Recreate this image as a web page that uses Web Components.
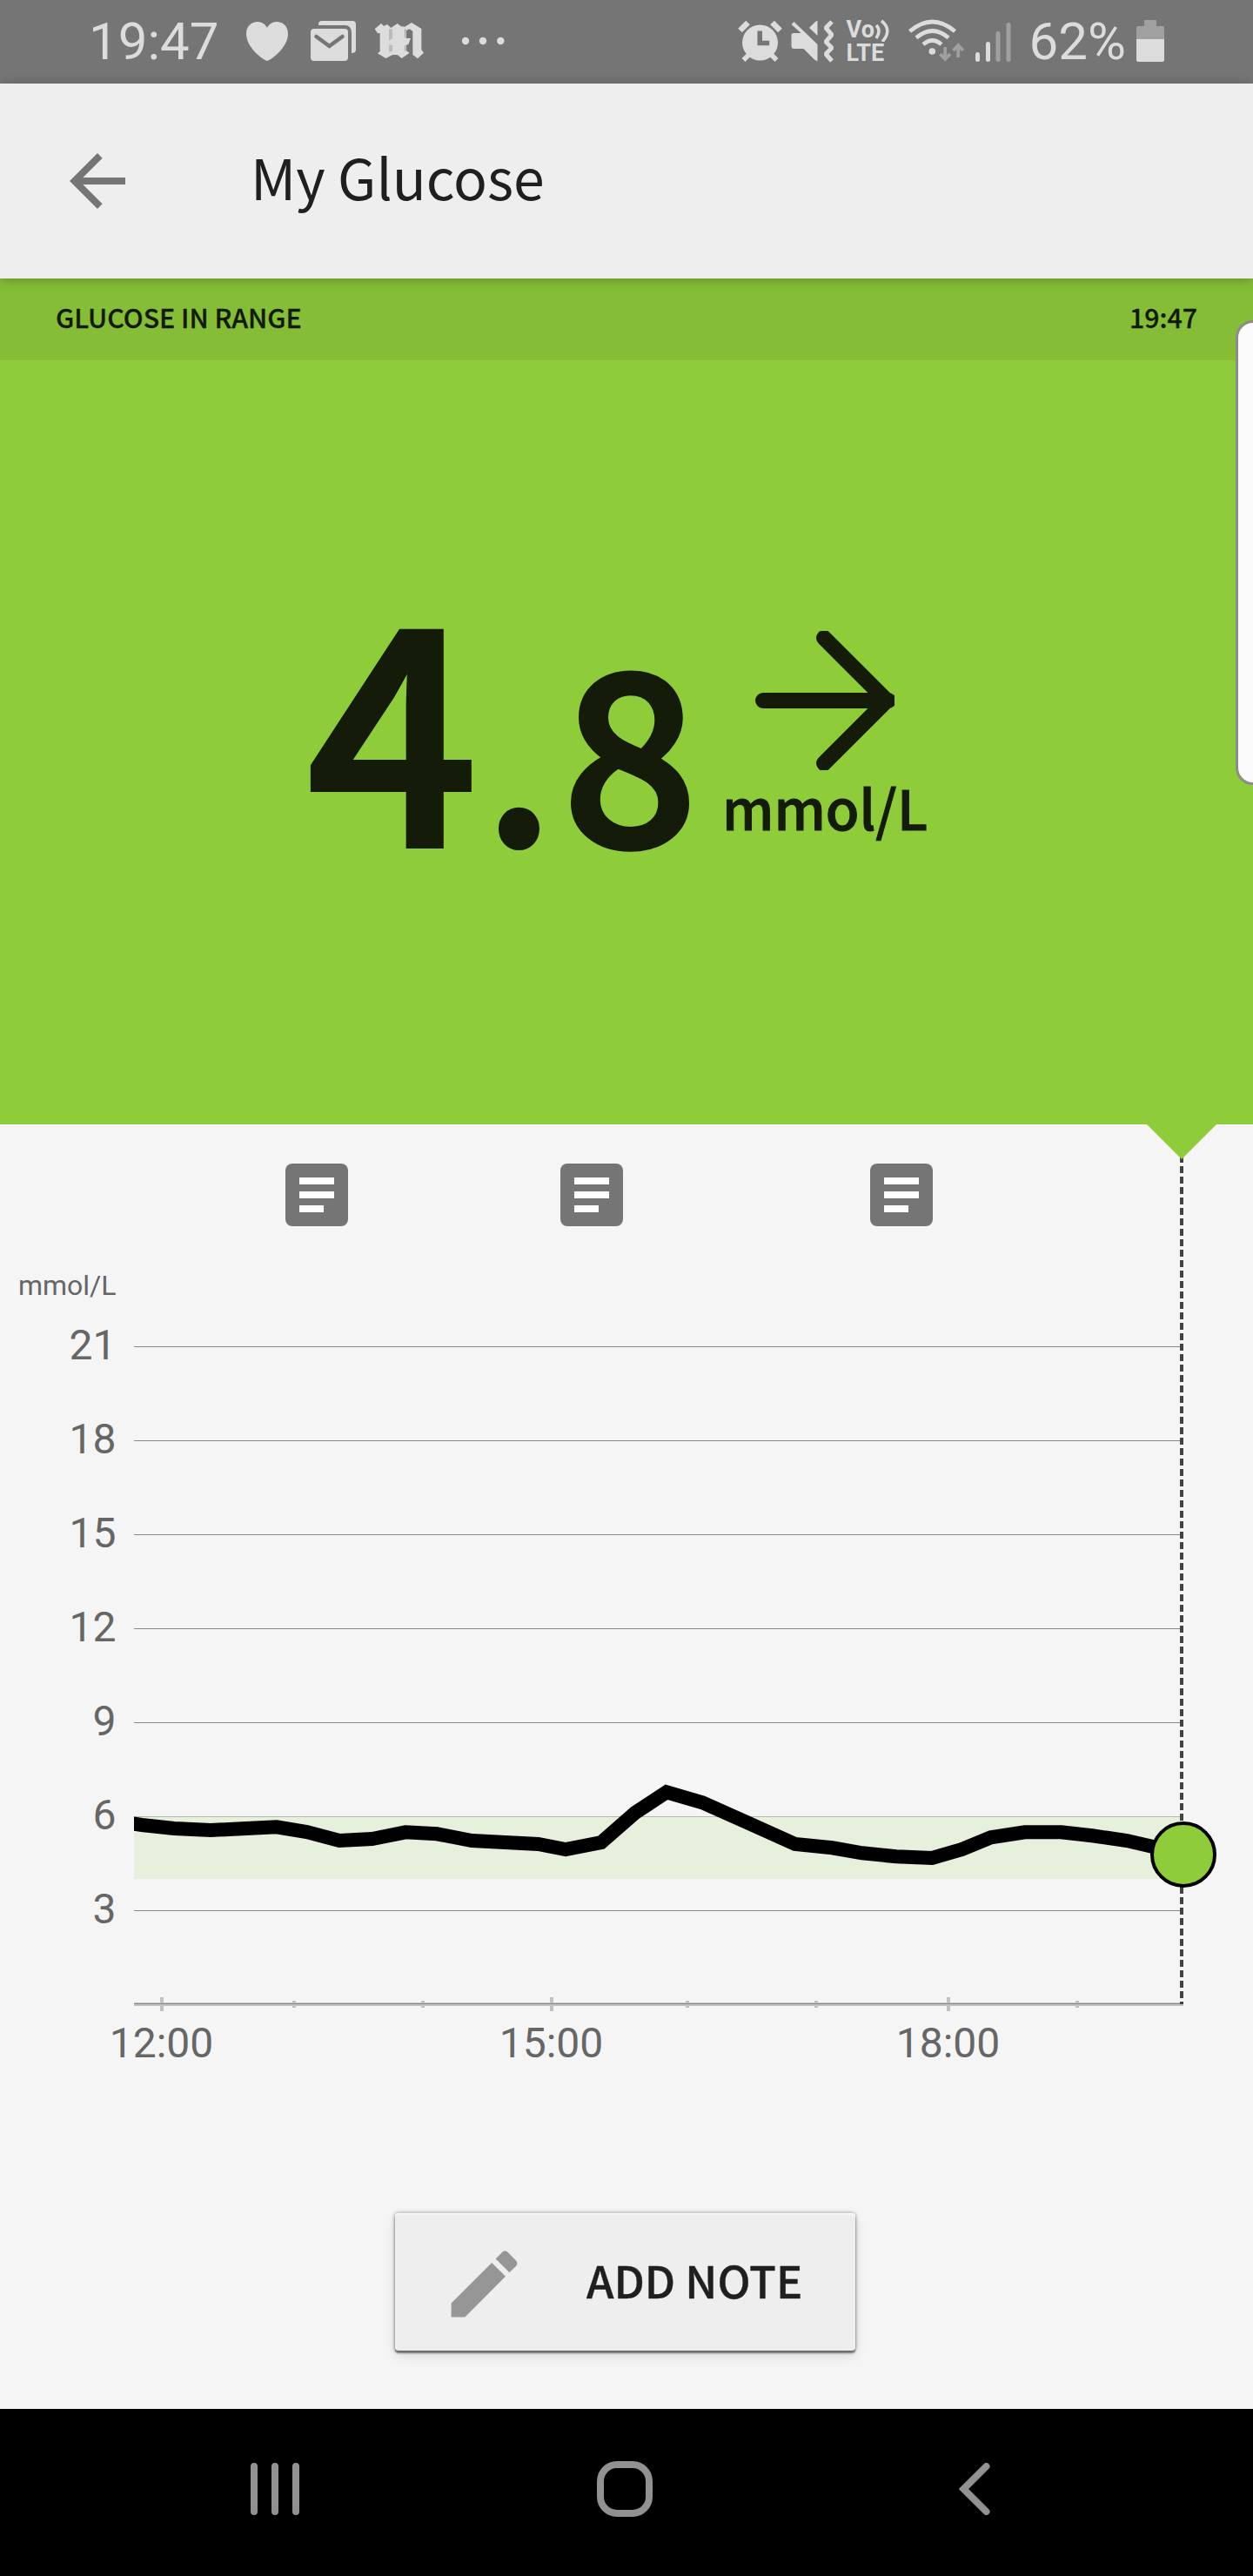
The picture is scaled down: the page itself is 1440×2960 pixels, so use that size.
<!DOCTYPE html>
<html lang="en">
<head>
<meta charset="utf-8">
<title>My Glucose</title>
<style>
    body {
        margin: 0;
        background: #f5f5f5;
        font-family: "Noto Sans CJK SC", "Noto Sans", sans-serif;
    }
</style>
</head>
<body>
<glucose-app></glucose-app>

<template id="status-bar-template">
    <style>
        :host {
            display: flex;
            justify-content: space-between;
            height: 96px;
            background: #757575;
            color: #dcdcdc;
            font: 60px/96px Roboto, sans-serif;
        }

        .group {
            display: flex;
        }

        .left {
            padding-left: 102px;
        }

        .right {
            padding-right: 102px;
        }

        svg {
            display: block;
            height: 96px;
            fill: #dcdcdc;
        }

        .volte {
            display: flex;
            flex-direction: column;
            width: 58px;
            margin-left: 15px;
            padding-top: 21px;
            font: bold 27px/27px Roboto, sans-serif;
        }

        .volte div {
            display: flex;
            height: 27px;
        }

        .volte svg {
            height: 26px;
            margin-top: 1px;
        }
    </style>
    <div class="group left">
        <span id="time"></span>
        <svg width="240" viewBox="250 0 240 96" style="margin-left:-1px">
            <path d="M307 70C301 68 283 54 283 39C283 30 289 25 296 25C301 25 305 28 307 32C309 28 313 25 318 25C325 25 331 30 331 39C331 54 313 68 307 70z"/>
            <path d="M366 29v-1q0-4 4-4h35q4 0 4 4v29q0 4-5 4v-23q0-9-8-9z"/>
            <rect x="357" y="33" width="43" height="37" rx="4"/>
            <path d="M363.500 42l15 11 15-11" fill="none" stroke="#757575" stroke-width="4.500" stroke-linecap="round"/>
            <g transform="translate(424 18) scale(.3333)">
                <path d="M20 46L42 27l10 9 11-6 13 12 22-15 13 10 13 1 23-14 34 21v73l8 10-21 20-17-14V54l-11-8-11 5v27h15l-8 21-7 2v20l11 7-27 19-15-12H82l-24 12-28-17 8-7V60l-8 1z"/>
                <path d="M72 46v38M78 46v34M72 100v24M78 102v22M125 46v30M125 102v20" stroke="#757575" stroke-width="2"/>
            </g>
        </svg>
        <svg width="50" viewBox="530 0 50 96" style="margin-left:40px">
            <circle cx="535" cy="47" r="4.200"/><circle cx="555" cy="47" r="4.200"/><circle cx="575.300" cy="47" r="4.200"/>
        </svg>
    </div>
    <div class="group right">
        <svg width="111" viewBox="846 0 111 96">
            <circle cx="872.500" cy="49" r="20.500"/>
            <path d="M849.500 35l9-9M895.500 35l-9-9" stroke="#dcdcdc" stroke-width="6.500"/>
            <path d="M853.500 69l7-7M891.500 69l-7-7" stroke="#dcdcdc" stroke-width="5.500"/>
            <path d="M872.200 35.500v14h11" fill="none" stroke="#757575" stroke-width="5.500"/>
            <path d="M911.500 25l27 26v19q-2 0-4-2l-12-12h-11q-3 0-3-3v-13q0-2 3-2h8l-11-10z"/>
            <path d="M929 32l7-7q1-1 2.500-1v17z"/>
            <path d="M955 25l-7 7 7 8-7 8 7 7-7 7 7 8" fill="none" stroke="#dcdcdc" stroke-width="5" stroke-linejoin="bevel"/>
        </svg>
        <div class="volte">
            <div><span>Vo</span><svg width="18" viewBox="1003 22 18 26"><path d="M1005 29q6 6 0 15M1011 24q13 10 1 24" fill="none" stroke="#dcdcdc" stroke-width="3.500"/></svg></div>
            <div><span>LTE</span></div>
        </div>
        <svg width="120" viewBox="1042 0 120 96" style="margin-left:12px">
            <g fill="none" stroke="#dcdcdc" stroke-width="4.800">
                <path d="M1044.500 36q26-22 52 0M1052 43.500q18.500-16 37 0M1060 51q10.500-9 21 0"/>
            </g>
            <circle cx="1070.300" cy="59" r="3.800"/>
            <path d="M1085.200 54v13M1079.500 62l5.700 6 5.700-6M1100.200 66v-14M1094.500 58l5.700-6 5.700 6" fill="none" stroke="#a0a0a0" stroke-width="3.800"/>
            <rect x="1120" y="60" width="5" height="11" rx="2.500"/>
            <rect x="1132" y="48" width="5" height="23" rx="2.500"/>
            <rect x="1143.500" y="36" width="5" height="35" rx="2.500" fill="#a0a0a0"/>
            <rect x="1155.500" y="26" width="5" height="45" rx="2.500" fill="#a0a0a0"/>
        </svg>
        <span id="battery" style="margin-left:20px"></span>
        <svg width="32" viewBox="1306 0 32 96" style="margin-left:12px">
            <path d="M1306 45v-13q0-2 2-2h7v-7h14v7h7q2 0 2 2v13z" fill="#a0a0a0"/>
            <path d="M1306 45h32v24q0 2-2 2h-28q-2 0-2-2z"/>
        </svg>
    </div>
</template>

<template id="app-bar-template">
    <style>
        :host {
            display: flex;
            align-items: center;
            position: relative;
            z-index: 1;
            height: 224px;
            background: #eee;
            color: #1f1f1f;
            box-shadow: 0 2px 12px rgba(0, 0, 0, 0.25);
        }

        svg {
            width: 96px;
            height: 96px;
            margin-left: 64px;
            fill: #757575;
        }

        h1 {
            margin: 0 0 12px 128px;
            font-size: 64.300px;
            line-height: 96px;
            font-weight: 400;
        }
    </style>
    <svg viewBox="0 0 24 24"><path d="M20 11H7.830l5.590-5.590L12 4l-8 8 8 8 1.410-1.410L7.830 13H20v-2z"/></svg>
    <h1><slot></slot></h1>
</template>

<template id="glucose-reading-template">
    <style>
        :host {
            display: flex;
            flex-direction: column;
            position: relative;
            height: 972px;
            background: #8fcc3a;
            color: #141b08;
        }

        header {
            display: flex;
            justify-content: space-between;
            height: 94px;
            padding: 0 64px;
            background: #85bd36;
            color: #111a04;
            font-size: 30.300px;
            line-height: 88px;
            font-weight: 500;
            -webkit-text-stroke: 0.3px;
        }

        .reading {
            display: flex;
            flex: 1;
            padding-left: 353px;
            font-weight: 500;
        }

        .value {
            display: flex;
            align-items: baseline;
            width: 473px;
            height: 400px;
            margin-top: 208px;
            line-height: 400px;
        }

        .whole {
            font-size: 344px;
            -webkit-text-stroke: 6px;
        }

        .point {
            margin-left: 4px;
            font-size: 290px;
            -webkit-text-stroke: 2px;
        }

        .fraction {
            margin-left: 7px;
            font-size: 272px;
            -webkit-text-stroke: 6px;
        }

        .side {
            display: flex;
            flex-direction: column;
            width: 240px;
            margin-top: 311px;
        }

        .side svg {
            width: 160px;
            height: 160px;
            margin-left: 42px;
        }

        .unit {
            padding-left: 4px;
            font-size: 63px;
            line-height: 83px;
            -webkit-text-stroke: 1px;
        }

        /* edge panel handle, floats over the right border */
        .handle {
            position: absolute;
            top: 48px;
            right: -20px;
            box-sizing: border-box;
            width: 40px;
            height: 534px;
            border: 3px solid #8c8c88;
            border-radius: 22px;
            background: #fafafa;
        }
    </style>
    <header><span><slot></slot></span><span id="time"></span></header>
    <div class="reading">
        <div class="value"><span class="whole"></span><span class="point">.</span><span class="fraction"></span></div>
        <div class="side">
            <svg viewBox="0 0 160 160"><path d="M9 80h144M79 8l72 72-72 72" fill="none" stroke="#141b08" stroke-width="18" stroke-linecap="round"/></svg>
            <span class="unit"></span>
        </div>
    </div>
    <div class="handle"></div>
</template>

<template id="glucose-chart-template">
    <style>
        :host {
            display: block;
            height: 1188px;
        }

        svg {
            display: block;
        }

        text {
            font-family: Roboto, sans-serif;
            font-size: 48px;
            fill: #666;
        }
    </style>
    <svg width="1440" height="1188" viewBox="0 1292 1440 1188"></svg>
</template>

<template id="note-button-template">
    <style>
        :host {
            display: flex;
            align-items: center;
            box-sizing: border-box;
            width: 529px;
            height: 158px;
            margin: 63px auto 0 454px;
            border-radius: 4px;
            background: #eee;
            color: #1f1f1f;
            font-size: 50.500px;
            font-weight: 500;
            -webkit-text-stroke: 0.4px;
            box-shadow: 0 3px 2px rgba(0, 0, 0, 0.45), 0 0 4px rgba(0, 0, 0, 0.4), 0 6px 14px rgba(0, 0, 0, 0.12), inset 0 2px 2px #f8f8f8;
        }

        svg {
            width: 101px;
            height: 101px;
            margin: 4px 0 0 52px;
            fill: #969696;
        }

        span {
            margin: 0 0 7px 67px;
            line-height: 80px;
        }
    </style>
    <svg viewBox="0 0 24 24"><path d="M3 17.250V21h3.750L17.810 9.940l-3.750-3.750L3 17.250zM20.710 7.040c.39-.39.39-1.020 0-1.410l-2.340-2.340c-.39-.39-1.020-.39-1.410 0l-1.830 1.830 3.750 3.750 1.830-1.830z"/></svg>
    <span><slot></slot></span>
</template>

<template id="nav-bar-template">
    <style>
        :host {
            display: flex;
            align-items: center;
            height: 192px;
            margin-top: auto;
            padding: 0 302px 0 288px;
            justify-content: space-between;
            background: #000;
        }

        svg {
            display: block;
            margin-top: -8px;
            fill: none;
            stroke: #919191;
            stroke-width: 8;
            stroke-linecap: round;
        }
    </style>
    <svg width="56" height="60"><path d="M4 4v52M28 4v52M52 4v52"/></svg>
    <svg width="64" height="64" style="margin-left:-10px"><rect x="4" y="4" width="56" height="56" rx="19"/></svg>
    <svg width="36" height="60"><path d="M31.500 4L5.500 30l26 26"/></svg>
</template>

<script>
(() => {
    class BaseElement extends HTMLElement {
        constructor(templateId) {
            super();
            const template = document.querySelector(templateId);
            this.attachShadow({mode: 'open'});
            this.shadowRoot.appendChild(template.content.cloneNode(true));
        }

        $(selector) {
            return this.shadowRoot.querySelector(selector);
        }
    }

    class StatusBar extends BaseElement {
        constructor() {
            super('#status-bar-template');
        }

        connectedCallback() {
            this.$('#time').textContent = this.getAttribute('time');
            this.$('#battery').textContent = this.getAttribute('battery');
        }
    }

    class AppBar extends BaseElement {
        constructor() {
            super('#app-bar-template');
        }
    }

    class GlucoseReading extends BaseElement {
        constructor() {
            super('#glucose-reading-template');
        }

        connectedCallback() {
            const [whole, fraction] = this.getAttribute('value').split('.');
            this.$('.whole').textContent = whole;
            this.$('.fraction').textContent = fraction;
            this.$('.unit').textContent = this.getAttribute('unit');
            this.$('#time').textContent = this.getAttribute('time');
        }
    }

    const POINTS = [
        [150, 2095], [163, 2097], [200, 2101], [242, 2103], [278, 2101.3], [317.7, 2099.3], [352.6, 2105],
        [390, 2115], [427.5, 2113], [466, 2105.3], [502.3, 2107.3], [542.3, 2115], [580.4, 2117],
        [618.5, 2119], [650, 2125], [691, 2117], [730, 2083], [766, 2059.3], [807.2, 2071.3],
        [857.7, 2093.7], [913.8, 2119], [956.5, 2123.3], [991, 2129.3], [1030, 2133.3], [1071.2, 2135],
        [1105.7, 2125], [1138.7, 2111.3], [1177.8, 2105.3], [1219.5, 2105.3], [1255, 2109.3],
        [1295, 2115], [1325, 2122], [1360, 2131]
    ];
    const HOURS = [[186, '12:00'], [338], [486], [634, '15:00'], [790], [938], [1090, '18:00'], [1238]];
    const NOTES = [328, 644, 1000];

    class GlucoseChart extends BaseElement {
        constructor() {
            super('#glucose-chart-template');
        }

        connectedCallback() {
            this.$('svg').innerHTML = this._notes() + this._grid() + this._axis() + this._curve();
        }

        _notes() {
            return NOTES.map(x => `
                <rect x="${x}" y="1337" width="72" height="72" rx="8" fill="#757575"/>
                <path d="M${x + 16} 1353h40v8h-40zM${x + 16} 1369h40v8h-40zM${x + 16} 1385h28v8h-28z" fill="#fff"/>
            `).join('');
        }

        _grid() {
            let out = `<text x="133.500" y="1488" text-anchor="end" style="font-size:32px">mmol/L</text>`;
            for (let v = 21; v >= 3; v -= 3) {
                const y = 2303 - v * 36;
                out += `<rect x="154" y="${y}" width="1204" height="1" fill="#888"/>
                    <text x="133.500" y="${y + 14.5}" text-anchor="end">${v}</text>`;
            }
            return out + '<rect x="154" y="2087" width="1204" height="72" fill="#d8ecc4" fill-opacity=".5"/>';
        }

        _axis() {
            let out = '<rect x="154" y="2301" width="1206" height="4" fill="#c2c2c2"/>';
            HOURS.forEach(([x, label]) => {
                const h = label ? 8 : 4;
                out += `<rect x="${x - 2}" y="${2303 - h}" width="4" height="${h * 2}" fill="#c2c2c2"/>`;
                if (label) {
                    out += `<text x="${x - 0.5}" y="2363.500" text-anchor="middle">${label}</text>`;
                }
            });
            return out + '<rect x="154" y="2302" width="1206" height="1" fill="#888"/>';
        }

        _curve() {
            return `
                <clipPath id="plot"><rect x="154" y="1500" width="1260" height="800"/></clipPath>
                <path d="M1358 1328V2303" stroke="#444" stroke-width="4" stroke-dasharray="8 4"/>
                <polyline clip-path="url(#plot)" points="${POINTS.join(' ')}" fill="none" stroke="#000" stroke-width="16"/>
                <path d="M1318 1292h80l-40 40z" fill="#8fcc3a"/>
                <circle cx="1360" cy="2131" r="36" fill="#8fcc3a" stroke="#000" stroke-width="4"/>
            `;
        }
    }

    class NoteButton extends BaseElement {
        constructor() {
            super('#note-button-template');
        }
    }

    class NavBar extends BaseElement {
        constructor() {
            super('#nav-bar-template');
        }
    }

    class GlucoseApp extends HTMLElement {
        constructor() {
            super();
            this.attachShadow({mode: 'open'});
            this.shadowRoot.innerHTML = `
                <style>
                    :host {
                        display: flex;
                        flex-direction: column;
                        width: 1440px;
                        height: 2960px;
                        overflow: hidden;
                    }
                </style>
                <status-bar time="19:47" battery="62%"></status-bar>
                <app-bar>My Glucose</app-bar>
                <glucose-reading value="4.8" unit="mmol/L" time="19:47">GLUCOSE IN RANGE</glucose-reading>
                <glucose-chart></glucose-chart>
                <note-button>ADD NOTE</note-button>
                <nav-bar></nav-bar>
            `;
        }
    }

    customElements.define('status-bar', StatusBar);
    customElements.define('app-bar', AppBar);
    customElements.define('glucose-reading', GlucoseReading);
    customElements.define('glucose-chart', GlucoseChart);
    customElements.define('note-button', NoteButton);
    customElements.define('nav-bar', NavBar);
    customElements.define('glucose-app', GlucoseApp);
})();
</script>
</body>
</html>
